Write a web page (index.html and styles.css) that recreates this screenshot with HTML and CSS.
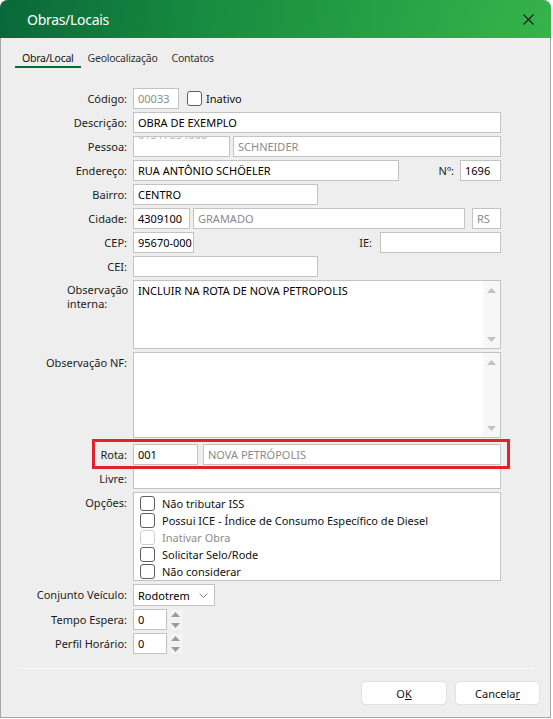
FILE: index.html
```html
<!DOCTYPE html>
<html>
<head>
<meta charset="utf-8">
<link rel="stylesheet" href="styles.css">
</head>
<body>
<div class="window">
  <div class="titlebar">
    <span class="title">Obras/Locais</span>
    <svg class="close" width="11" height="11" viewBox="0 0 11 11"><path d="M0.5 0.5L10.5 10.5M10.5 0.5L0.5 10.5"/></svg>
  </div>
  <div class="content">
    <div class="tabs">
      <div class="tab active">Obra/Local</div>
      <div class="tab">Geolocalização</div>
      <div class="tab">Contatos</div>
    </div>

    <div class="form">
      <div class="row">
        <div class="lbl">Código:</div>
        <div class="fields">
          <div class="input w46 dim">00033</div>
          <span class="check ml8"></span><span class="chk-text">Inativo</span>
        </div>
      </div>
      <div class="row">
        <div class="lbl">Descrição:</div>
        <div class="fields"><div class="input grow">OBRA DE EXEMPLO</div></div>
      </div>
      <div class="row">
        <div class="lbl">Pessoa:</div>
        <div class="fields">
          <div class="input w97 dim clipped"><span class="cut">01317854000</span></div>
          <div class="input grow dim ml3">SCHNEIDER</div>
        </div>
      </div>
      <div class="row">
        <div class="lbl">Endereço:</div>
        <div class="fields">
          <div class="input w266">RUA ANTÔNIO SCHÖELER</div>
          <div class="inlbl">Nº:</div>
          <div class="input w41">1696</div>
        </div>
      </div>
      <div class="row">
        <div class="lbl">Bairro:</div>
        <div class="fields"><div class="input w185">CENTRO</div></div>
      </div>
      <div class="row">
        <div class="lbl">Cidade:</div>
        <div class="fields">
          <div class="input w57">4309100</div>
          <div class="input grow dim ml3">GRAMADO</div>
          <div class="input w29 dim ml7">RS</div>
        </div>
      </div>
      <div class="row">
        <div class="lbl">CEP:</div>
        <div class="fields">
          <div class="input w61">95670-000</div>
          <div class="inlbl ie">IE:</div>
          <div class="input w121"></div>
        </div>
      </div>
      <div class="row">
        <div class="lbl">CEI:</div>
        <div class="fields"><div class="input w185"></div></div>
      </div>
      <div class="row">
        <div class="lbl top two">Observação<br>interna:</div>
        <div class="fields">
          <div class="textarea h69">
            <div class="ta-text">INCLUIR NA ROTA DE NOVA PETROPOLIS</div>
            <div class="vscroll">
              <svg width="9" height="5" viewBox="0 0 9 5"><path d="M4.5 0L9 5H0Z"/></svg>
              <svg width="9" height="5" viewBox="0 0 9 5"><path d="M0 0H9L4.5 5Z"/></svg>
            </div>
          </div>
        </div>
      </div>
      <div class="row">
        <div class="lbl top">Observação NF:</div>
        <div class="fields">
          <div class="textarea h86">
            <div class="ta-text"></div>
            <div class="vscroll">
              <svg width="9" height="5" viewBox="0 0 9 5"><path d="M4.5 0L9 5H0Z"/></svg>
              <svg width="9" height="5" viewBox="0 0 9 5"><path d="M0 0H9L4.5 5Z"/></svg>
            </div>
          </div>
        </div>
      </div>
      <div class="row rota">
        <div class="lbl">Rota:</div>
        <div class="fields">
          <div class="input w65">001</div>
          <div class="input grow dim ml5">NOVA PETRÓPOLIS</div>
        </div>
        <div class="highlight"></div>
      </div>
      <div class="row">
        <div class="lbl">Livre:</div>
        <div class="fields"><div class="input grow"></div></div>
      </div>
      <div class="row">
        <div class="lbl top">Opções:</div>
        <div class="fields">
          <div class="options">
            <div class="opt"><span class="check"></span><span class="chk-text">Não tributar ISS</span></div>
            <div class="opt"><span class="check"></span><span class="chk-text">Possui ICE - Índice de Consumo Específico de Diesel</span></div>
            <div class="opt disabled"><span class="check"></span><span class="chk-text">Inativar Obra</span></div>
            <div class="opt"><span class="check"></span><span class="chk-text">Solicitar Selo/Rode</span></div>
            <div class="opt"><span class="check"></span><span class="chk-text">Não considerar</span></div>
          </div>
        </div>
      </div>
      <div class="row">
        <div class="lbl">Conjunto Veículo:</div>
        <div class="fields">
          <div class="combo">
            <span>Rodotrem</span>
            <svg width="9" height="5" viewBox="0 0 9 5"><path d="M0.5 0.5L4.5 4.5L8.5 0.5"/></svg>
          </div>
        </div>
      </div>
      <div class="row">
        <div class="lbl">Tempo Espera:</div>
        <div class="fields">
          <div class="input w34">0</div>
          <div class="spin">
            <div class="spin-btn"><svg width="9" height="5" viewBox="0 0 9 5"><path d="M4.5 0L9 5H0Z"/></svg></div>
            <div class="spin-btn"><svg width="9" height="5" viewBox="0 0 9 5"><path d="M0 0H9L4.5 5Z"/></svg></div>
          </div>
        </div>
      </div>
      <div class="row">
        <div class="lbl">Perfil Horário:</div>
        <div class="fields">
          <div class="input w34">0</div>
          <div class="spin">
            <div class="spin-btn"><svg width="9" height="5" viewBox="0 0 9 5"><path d="M4.5 0L9 5H0Z"/></svg></div>
            <div class="spin-btn"><svg width="9" height="5" viewBox="0 0 9 5"><path d="M0 0H9L4.5 5Z"/></svg></div>
          </div>
        </div>
      </div>
    </div>

    <div class="separator"></div>
    <div class="buttons">
      <div class="btn ok">O<u>K</u></div>
      <div class="btn cancel">Cancela<u>r</u></div>
    </div>
  </div>
</div>
</body>
</html>
```

FILE: styles.css
```css
* { box-sizing: border-box; }
html, body { margin: 0; padding: 0; background: #ffffff; }
body {
  width: 553px;
  height: 719px;
  overflow: hidden;
  font-family: "Noto Sans", "Open Sans", sans-serif;
  font-size: 11px;
  color: #1c1c1c;
}
.window {
  width: 551px;
  height: 718px;
  background: #eeeeee;
  border-radius: 8px 8px 0 0;
  overflow: hidden;
  box-shadow: inset 1px 0 #a6a6a6, inset -1px 0 #a6a6a6, inset 0 -1px #a6a6a6;
  display: flex;
  flex-direction: column;
}
.titlebar {
  height: 38px;
  flex: none;
  display: flex;
  align-items: center;
  padding-left: 27px;
  background: linear-gradient(100deg, #09683a 0%, #178a3f 35%, #26a246 70%, #37b34b 100%);
}
.title {
  color: #ffffff;
  font-size: 14px;
  letter-spacing: -0.3px;
  margin-top: 1px;
}
.close {
  margin-left: auto;
  margin-right: 17px;
}
.close path { stroke: #1a1a1a; stroke-width: 1.1; fill: none; }

.content { display: flex; flex-direction: column; }

.tabs {
  display: flex;
  margin: 12px 0 0 15px;
}
.tab {
  padding: 0 7px;
  line-height: 16px;
  height: 18px;
  color: #333333;
  font-size: 10.5px;
  letter-spacing: -0.25px;
  border-bottom: 2px solid transparent;
}
.tab.active {
  color: #111111;
  border-bottom-color: #0c6a3a;
}

.form {
  margin-top: 20px;
  width: 501px;
  display: flex;
  flex-direction: column;
  gap: 3px;
}
.row {
  display: grid;
  grid-template-columns: 127px 1fr;
  column-gap: 6px;
}
.lbl {
  text-align: right;
  line-height: 21px;
  white-space: nowrap;
}
.lbl.two {
  text-align: left;
  padding-left: 67px;
  line-height: 13.5px;
  padding-top: 3px;
}
.fields {
  display: flex;
  align-items: center;
  min-width: 0;
}
.input {
  height: 21px;
  background: #ffffff;
  border: 1px solid #c3c3c3;
  padding: 0 4px;
  line-height: 19px;
  color: #000000;
  white-space: nowrap;
  overflow: hidden;
  flex: none;
}
.input.grow { flex: 1; min-width: 0; }
.input.dim { color: #8a8a8a; }
.clipped .cut { display: inline-block; transform: translateY(-12.5px); color: #b4b4b4; }
.w29 { width: 29px; }
.w34 { width: 34px; }
.w41 { width: 41px; }
.w46 { width: 46px; }
.w57 { width: 57px; }
.w61 { width: 61px; }
.w65 { width: 65px; }
.w97 { width: 97px; }
.w121 { width: 121px; }
.w185 { width: 185px; }
.w266 { width: 266px; }
.ml3 { margin-left: 3px; }
.ml5 { margin-left: 5px; }
.ml7 { margin-left: 7px; }
.ml8 { margin-left: 8px; }

.inlbl {
  flex: 1;
  text-align: right;
  padding-right: 6px;
  line-height: 21px;
}
.inlbl.ie { padding-right: 8px; }

.check {
  width: 15px;
  height: 15px;
  flex: none;
  background: #ffffff;
  border: 1px solid #5e5e5e;
  border-radius: 3px;
}
.chk-text { margin-left: 4px; color: #111111; }

.textarea {
  flex: 1;
  display: flex;
  background: #ffffff;
  border: 1px solid #c3c3c3;
}
.h69 { height: 69px; }
.h86 { height: 86px; }
.ta-text {
  flex: 1;
  padding: 2px 4px;
  color: #000000;
  line-height: 15px;
}
.vscroll {
  width: 17px;
  background: #f7f7f7;
  display: flex;
  flex-direction: column;
  justify-content: space-between;
  align-items: center;
  padding: 7px 0 6px;
}
.vscroll path { fill: #c2c2c2; }

.rota { position: relative; margin-top: 3px; }
.highlight {
  position: absolute;
  left: 92px;
  top: -5px;
  width: 418px;
  height: 30px;
  border: 3px solid #e3202c;
  pointer-events: none;
}

.options {
  flex: 1;
  height: 89px;
  background: #ffffff;
  border: 1px solid #c3c3c3;
  padding: 2px 0 0 6px;
  display: flex;
  flex-direction: column;
}
.opt {
  display: flex;
  align-items: center;
  height: 17px;
}
.opt .chk-text { margin-left: 7px; }
.opt.disabled .check { border-color: #cfcfcf; }
.opt.disabled .chk-text { color: #8c8c8c; }

.combo {
  width: 82px;
  height: 22px;
  background: #ffffff;
  border: 1px solid #c3c3c3;
  display: flex;
  align-items: center;
  padding: 0 6px 0 4px;
  color: #000000;
}
.combo svg { margin-left: auto; }
.combo path { stroke: #8c8c8c; fill: none; stroke-width: 1; }

.spin {
  width: 15px;
  height: 21px;
  margin-left: 1px;
  display: flex;
  flex-direction: column;
  gap: 1px;
}
.spin-btn {
  flex: 1;
  background: #f3f3f3;
  display: flex;
  align-items: center;
  justify-content: center;
}
.spin-btn path { fill: #9b9b9b; }

.separator {
  height: 1px;
  background: #fafafa;
  margin: 14px 16px 0 18px;
}
.buttons {
  display: flex;
  justify-content: flex-end;
  gap: 10px;
  margin-top: 13px;
  padding-right: 12px;
}
.btn {
  height: 22px;
  background: #ffffff;
  border-radius: 4px;
  box-shadow: 0 0 0 1px #e2e2e2, 0 1px 1px rgba(0,0,0,0.12);
  display: flex;
  align-items: center;
  justify-content: center;
  color: #111111;
}
.btn.ok { width: 84px; }
.btn.cancel { width: 83px; }
```
